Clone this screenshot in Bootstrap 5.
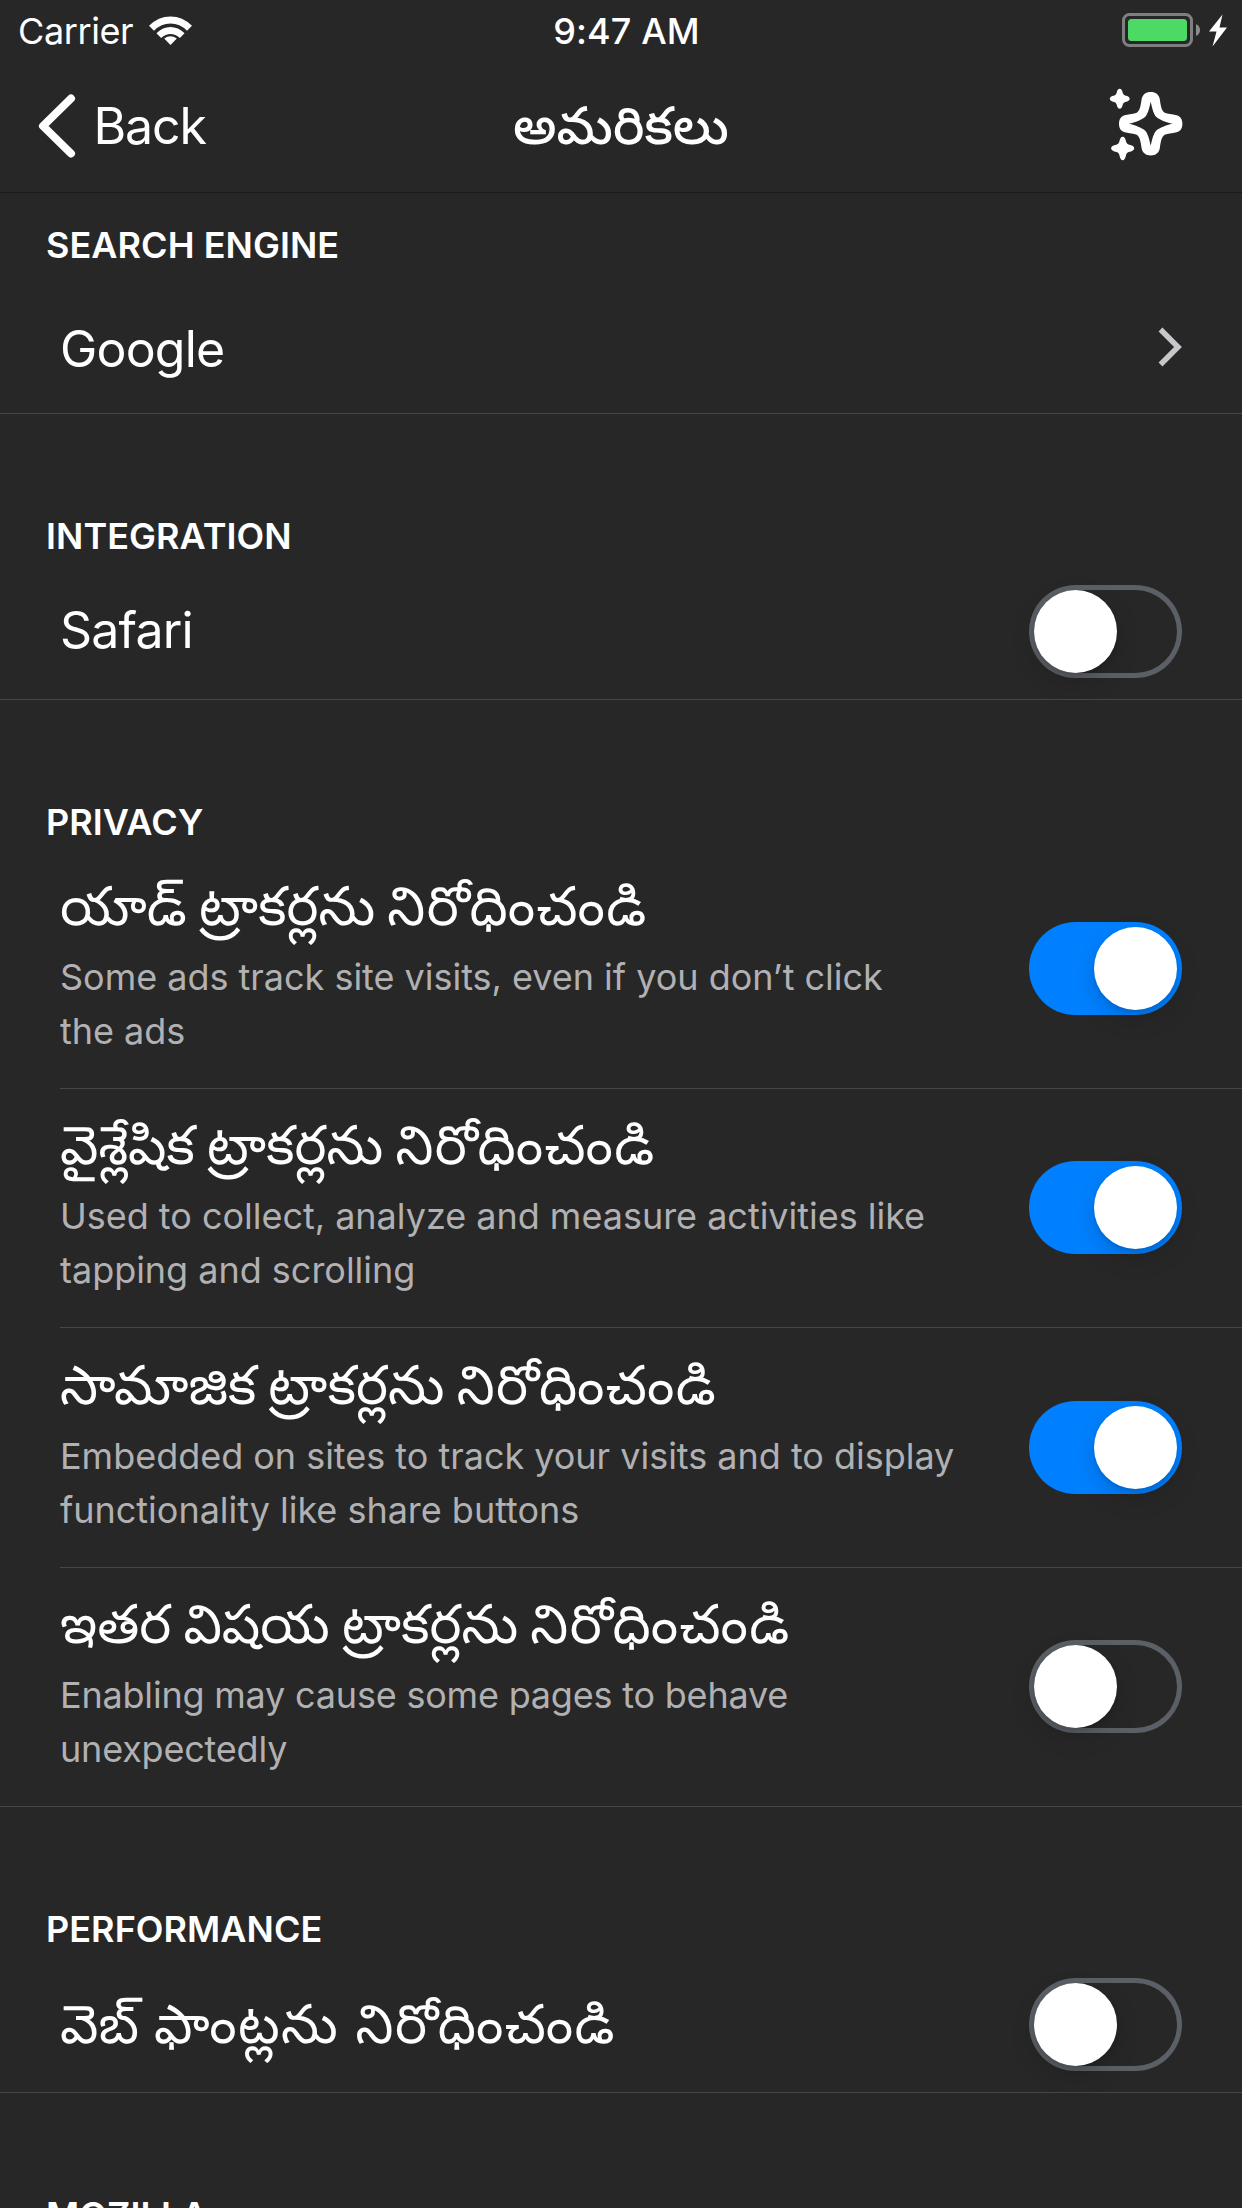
<!DOCTYPE html>
<html lang="te" data-bs-theme="dark">
<head>
<meta charset="utf-8">
<meta name="viewport" content="width=device-width, initial-scale=1">
<title>అమరికలు</title>
<link href="https://cdn.jsdelivr.net/npm/bootstrap@5.3.0/dist/css/bootstrap.min.css" rel="stylesheet">
<style>
  html, body { height: 100%; }
  body { background: #272727; color: #fff; font-family: Inter, "Noto Sans Telugu", sans-serif; overflow: hidden; }
  svg { display: block; flex: none; }
  .status-bar { height: 60px; font-size: 36px; line-height: 62px; padding: 0 15px 0 18px; letter-spacing: -.4px; }
  .status-bar > div { flex: 1 1 0; }
  .status-bar .clock { flex: none; font-weight: 500; letter-spacing: .1px; margin-left: 8px; }
  .title-bar { height: 133px; padding: 0 38px; border-bottom: 1px solid #1b1b1b; }
  .title-bar > * { flex: 1 1 0; }
  .title-bar h1 { flex: none; margin: 0 0 2px; font-size: 52.3px; font-weight: 500; line-height: 130px; }
  .title-bar .sparkle { margin: 0 21px 2px 0; }
  .back-link { font-size: 50px; line-height: 132px; letter-spacing: -1.1px; color: #fff; text-decoration: none; }
  .back-link span { margin-left: 17.5px; }
  .group-title { height: 150px; margin: 0; padding: 0 46px 9px; font-size: 36px; font-weight: 600; line-height: 38px; letter-spacing: .05px; }
  .group-title.first { height: 80px; }
  .setting { height: 136px; padding: 0 60px; border: 0 solid #464648; border-bottom-width: 1px; }
  .setting.choice { height: 141px; padding-top: 12px; }
  .setting.choice svg { margin-bottom: 5px; }
  .setting.tall { height: 239px; }
  .setting.tall.social { height: 240px; }
  .setting.inset { padding-left: 0; margin-left: 60px; }
  .name { font-size: 50px; line-height: 60px; letter-spacing: -.8px; }
  .name.te { font-size: 54px; letter-spacing: 0; word-spacing: -3px; white-space: nowrap; }
  .name.te .loose { letter-spacing: 1.4px; }
  .name.te.fonts { word-spacing: 0; padding-bottom: 2px; }
  .tall .name { margin-bottom: 14px; }
  .about { width: 910px; margin: 0; padding-bottom: 4px; font-size: 36px; line-height: 54px; color: #b1b1b3; letter-spacing: -.02px; }
  .about.tight { letter-spacing: -.2px; }
  .switch { width: 153px; height: 93px; padding: 5px; border-radius: 47px; flex: none; box-shadow: inset 0 0 0 5px #5b5f66; }
  .switch.on { background: #0080ff; box-shadow: none; justify-content: flex-end; }
  .tall .switch { margin-bottom: 1px; }
  .knob { width: 83px; height: 83px; border-radius: 50%; background: #fff; box-shadow: 0 9px 24px rgba(0,0,0,.15), 0 3px 4px rgba(0,0,0,.1); }
</style>
</head>
<body>
<header>
  <div class="status-bar d-flex align-items-start">
    <div class="d-flex">
      <span>Carrier</span>
      <svg class="ms-3" width="43" height="60" viewBox="0 0 43 60" fill="none" stroke="#fff">
        <path d="M2.500 28.300C13.500 17.300 29.500 17.300 40.500 28.300" stroke-width="7"/>
        <path d="M9.800 35.600C17 28.800 26 28.800 33.200 35.600" stroke-width="6.800"/>
        <path d="M21.500 45L15.200 38.500Q21.500 33.800 27.800 38.500Z" fill="#fff" stroke="none"/>
      </svg>
    </div>
    <span class="clock">9:47 AM</span>
    <div class="d-flex justify-content-end">
      <svg width="106" height="60" viewBox="0 0 106 60">
        <rect x="2.500" y="14.500" width="68" height="31" rx="6" fill="none" stroke="#7f7f7f" stroke-width="3"/>
        <rect x="7" y="19" width="59" height="22" rx="3.500" fill="#4cd964"/>
        <path d="M75 24q4 2 4 6t-4 6z" fill="#8c8c8c"/>
        <path d="M101.500 14.500L88 31.500h7.500L91.500 46.500L106 27.500h-7.500z" fill="#fff"/>
      </svg>
    </div>
  </div>
  <nav class="title-bar d-flex align-items-center">
    <a class="back-link d-flex align-items-center" href="#">
      <svg width="38" height="64" viewBox="0 0 38 64"><path d="M33 4.500L5 32L33 59.500" fill="none" stroke="#fff" stroke-width="8" stroke-linecap="round" stroke-linejoin="round"/></svg>
      <span>Back</span>
    </a>
    <h1>అమరికలు</h1>
    <div class="d-flex justify-content-end">
      <svg class="sparkle" width="74" height="74" viewBox="0 0 74 74" fill="#fff">
        <path transform="translate(41.700 35.700)" fill-rule="evenodd" d="M0-31.700C5-31.700 8-29 9-25C10-19 10.500-13 14-11C17-9.500 21-10 26-8.500C30-7.500 31.700-4 31.700 0S30 7.500 26 8.500C21 10 17 9.500 14 11C10.500 13 10 19 9 25C8 29 5 31.700 0 31.700S-8 29-9 25C-10 19-10.500 13-14 11C-17 9.500-21 10-26 8.500C-30 7.500-31.700 4-31.700 0S-30-7.500-26-8.500C-21-10-17-9.500-14-11C-10.500-13-10-19-9-25C-8-29-5-31.700 0-31.700ZM0-22C-1.500-15-3-9-6-6.500C-9-4-15-1.500-22 0C-15 1.500-9 4-6 6.500C-3 9-1.500 15 0 22C1.500 15 3 9 6 6.500C9 4 15 1.500 22 0C15-1.500 9-4 6-6.500C3-9 1.500-15 0-22Z"/>
        <g stroke="#fff" stroke-width="1.400" stroke-linejoin="round">
          <path d="M10.700 1.500Q12.300 1.500 13 5Q13.500 7.500 16 8.200Q20 9 20 10.800T16 13.400Q13.500 14 13 16.500Q12.300 20 10.700 20T8.400 16.500Q7.900 14 5.400 13.400Q1.500 12.600 1.500 10.800T5.400 8.200Q7.900 7.500 8.400 5Q9 1.500 10.700 1.500Z"/>
          <path d="M13.700 49.500Q15.600 49.500 16.400 54Q17 56.500 19.500 57.200Q24.500 58.200 24.500 60.300T19.500 63.400Q17 64 16.400 66.600Q15.600 71.500 13.700 71.500T11 66.600Q10.400 64 7.900 63.400Q2.800 62.400 2.800 60.300T7.900 57.200Q10.400 56.500 11 54Q11.800 49.500 13.700 49.500Z"/>
        </g>
      </svg>
    </div>
  </nav>
</header>
<main>
  <h2 class="group-title first d-flex align-items-end">SEARCH ENGINE</h2>
  <div class="setting choice d-flex align-items-center justify-content-between">
    <span class="name">Google</span>
    <svg width="24" height="40" viewBox="0 0 24 40"><path d="M2.500 2.500L20 20L2.500 37.500" fill="none" stroke="#c7c7cc" stroke-width="5.500"/></svg>
  </div>

  <h2 class="group-title d-flex align-items-end">INTEGRATION</h2>
  <div class="setting d-flex align-items-center justify-content-between">
    <span class="name pb-1">Safari</span>
    <div class="switch d-flex" role="switch" aria-checked="false"><div class="knob"></div></div>
  </div>

  <h2 class="group-title d-flex align-items-end">PRIVACY</h2>
  <div class="setting tall inset d-flex align-items-center justify-content-between">
    <div><div class="name te">యాడ్ ట్రాకర్లను <span class="loose">నిరోధించండి</span></div><p class="about">Some ads track site visits, even if you don’t click<br>the ads</p></div>
    <div class="switch on d-flex" role="switch" aria-checked="true"><div class="knob"></div></div>
  </div>
  <div class="setting tall inset d-flex align-items-center justify-content-between">
    <div><div class="name te">వైశ్లేషిక ట్రాకర్లను <span class="loose">నిరోధించండి</span></div><p class="about">Used to collect, analyze and measure activities like<br>tapping and scrolling</p></div>
    <div class="switch on d-flex" role="switch" aria-checked="true"><div class="knob"></div></div>
  </div>
  <div class="setting tall social inset d-flex align-items-center justify-content-between">
    <div><div class="name te">సామాజిక ట్రాకర్లను <span class="loose">నిరోధించండి</span></div><p class="about">Embedded on sites to track your visits and to display<br>functionality like share buttons</p></div>
    <div class="switch on d-flex" role="switch" aria-checked="true"><div class="knob"></div></div>
  </div>
  <div class="setting tall d-flex align-items-center justify-content-between">
    <div><div class="name te">ఇతర విషయ ట్రాకర్లను <span class="loose">నిరోధించండి</span></div><p class="about tight">Enabling may cause some pages to behave<br>unexpectedly</p></div>
    <div class="switch d-flex" role="switch" aria-checked="false"><div class="knob"></div></div>
  </div>

  <h2 class="group-title d-flex align-items-end">PERFORMANCE</h2>
  <div class="setting d-flex align-items-center justify-content-between">
    <span class="name te fonts">వెబ్ <span class="loose">ఫాంట్లను నిరోధించండి</span></span>
    <div class="switch d-flex" role="switch" aria-checked="false"><div class="knob"></div></div>
  </div>

  <h2 class="group-title d-flex align-items-end">MOZILLA</h2>
</main>
<script src="https://cdn.jsdelivr.net/npm/bootstrap@5.3.0/dist/js/bootstrap.bundle.min.js"></script>
</body>
</html>
